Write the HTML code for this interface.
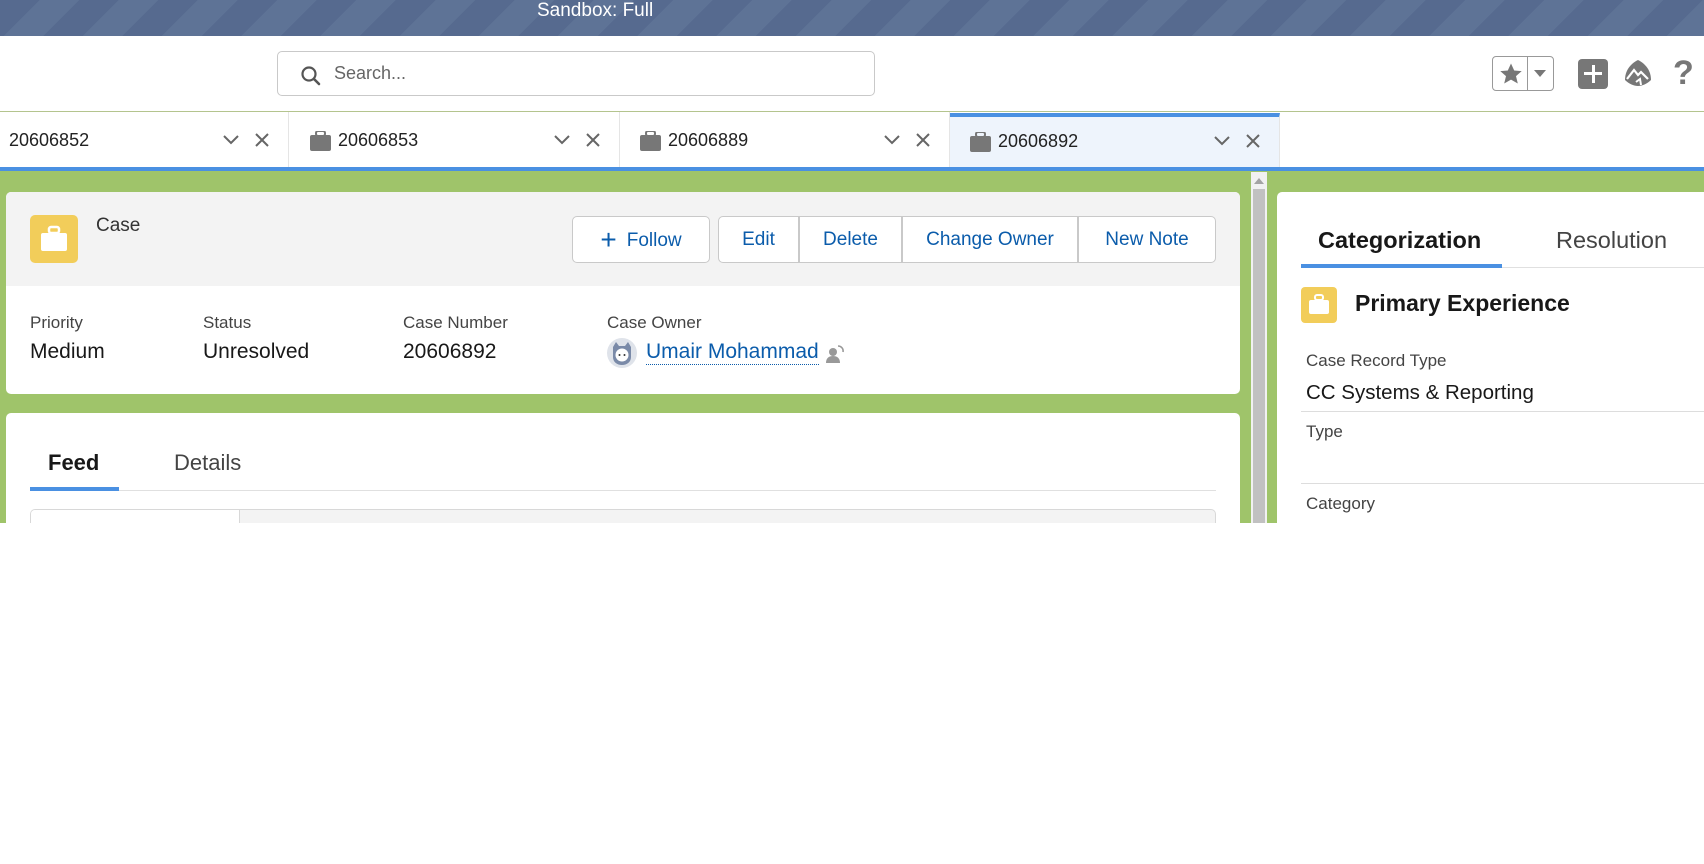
<!DOCTYPE html>
<html><head><meta charset="utf-8"><style>
*{box-sizing:border-box;margin:0;padding:0}
body{width:1704px;height:864px;overflow:hidden;background:#fff;font-family:"Liberation Sans",sans-serif;position:relative;color:#181818}
.abs{position:absolute}
.banner{left:0;top:0;width:1704px;height:36px;background:repeating-linear-gradient(135deg,#566a8f 0 28px,#5e7396 28px 56px)}
.search{left:277px;top:51px;width:598px;height:45px;border:1px solid #c9c9c9;border-radius:5px;background:#fff}
.tabbar{left:0;top:111px;width:1704px;height:60px;border-top:1px solid #b4c48e;background:#fff}
.tab{top:112px;height:56px;width:330px;border-right:1px solid #e5e5e5;font-size:18px;color:#222}
.tab .t{position:absolute;top:18px}
.bi{position:absolute;top:19px;width:21px;height:18px}
.green{left:0;top:171px;width:1704px;height:352px;background:#9fc46a}
.card{background:#fff;border-radius:5px}
.lbl{font-size:17px;color:#444}
.val{font-size:21px;color:#181818}
.btn{top:216px;height:47px;border:1px solid #c9c9c9;background:#fff;color:#0b5cab;font-size:19px;line-height:45px;text-align:center}
</style></head><body>
<div class="abs banner"></div>
<div class="abs" style="left:537px;top:0;color:#fff;font-size:19px;line-height:22px">Sandbox: Full</div>
<div class="abs" style="left:0;top:36px;width:1704px;height:75px;background:#fff"></div>
<div class="abs search">
<svg class="abs" style="left:22px;top:13px" width="22" height="22" viewBox="0 0 22 22"><circle cx="9" cy="9" r="6.5" fill="none" stroke="#555" stroke-width="2.2"/><path d="M14 14l5 5" stroke="#555" stroke-width="2.6" stroke-linecap="round"/></svg>
<span class="abs" style="left:56px;top:11px;font-size:18px;color:#666">Search...</span></div>
<div class="abs" style="left:1492px;top:56px;width:62px;height:35px;border:1px solid #999;border-radius:4px;background:#fff">
<svg class="abs" style="left:6px;top:5px" width="24" height="24" viewBox="0 0 24 24"><path d="M12 1.5l3.2 7 7.5.6-5.7 5 1.8 7.4L12 17.6 5.2 21.5 7 14.1 1.3 9.1l7.5-.6z" fill="#777"/></svg>
<div class="abs" style="left:34px;top:0;width:1px;height:33px;background:#999"></div>
<svg class="abs" style="left:40px;top:12px" width="14" height="10"><path d="M1 1h12L7 8z" fill="#777"/></svg></div>
<div class="abs" style="left:1578px;top:59px;width:30px;height:30px;background:#777;border-radius:4px">
<div class="abs" style="left:6px;top:13px;width:18px;height:3px;background:#fff"></div><div class="abs" style="left:13.5px;top:6px;width:3px;height:18px;background:#fff"></div></div>
<svg class="abs" style="left:1622px;top:58px" width="32" height="32" viewBox="0 0 32 32"><path d="M16 2C8 6 3 13 3 22c4 4 9 6 13 6s9-2 13-6c0-9-5-16-13-20z" fill="#777"/><path d="M5 21l7-9 4 5 3-3 7 7" fill="none" stroke="#fff" stroke-width="2.2"/><path d="M14 24l4-3 1 6" fill="none" stroke="#fff" stroke-width="2"/></svg>
<div class="abs" style="left:1673px;top:54px;font-size:34px;font-weight:bold;color:#777">?</div>

<div class="abs tabbar"></div>
<div class="abs tab" style="left:-41px"><span class="t" style="left:50px">20606852</span><div class="bi" style="left:34px;width:6px;background:#777;border-radius:2px"></div>
<svg class="abs" style="left:264px;top:23px" width="16" height="10"><path d="M1 1l7 7 7-7" fill="none" stroke="#666" stroke-width="2"/></svg><svg class="abs" style="left:296px;top:21px" width="14" height="14"><path d="M1 1l12 12M13 1L1 13" stroke="#666" stroke-width="2"/></svg></div>
<div class="abs tab" style="left:290px"><div class="bi" style="left:20px"><svg width="21" height="20"><rect x="6" y="0" width="9" height="5" rx="2" fill="none" stroke="#777" stroke-width="2"/><rect x="0" y="4" width="21" height="16" rx="2" fill="#777"/></svg></div><span class="t" style="left:48px">20606853</span>
<svg class="abs" style="left:264px;top:23px" width="16" height="10"><path d="M1 1l7 7 7-7" fill="none" stroke="#666" stroke-width="2"/></svg><svg class="abs" style="left:296px;top:21px" width="14" height="14"><path d="M1 1l12 12M13 1L1 13" stroke="#666" stroke-width="2"/></svg></div>
<div class="abs tab" style="left:620px"><div class="bi" style="left:20px"><svg width="21" height="20"><rect x="6" y="0" width="9" height="5" rx="2" fill="none" stroke="#777" stroke-width="2"/><rect x="0" y="4" width="21" height="16" rx="2" fill="#777"/></svg></div><span class="t" style="left:48px">20606889</span>
<svg class="abs" style="left:264px;top:23px" width="16" height="10"><path d="M1 1l7 7 7-7" fill="none" stroke="#666" stroke-width="2"/></svg><svg class="abs" style="left:296px;top:21px" width="14" height="14"><path d="M1 1l12 12M13 1L1 13" stroke="#666" stroke-width="2"/></svg></div>
<div class="abs tab" style="left:950px;width:330px;background:#eef4fc;border-top:4px solid #4a90e2;top:113px;height:55px"><div class="bi" style="left:20px;top:15px"><svg width="21" height="20"><rect x="6" y="0" width="9" height="5" rx="2" fill="none" stroke="#777" stroke-width="2"/><rect x="0" y="4" width="21" height="16" rx="2" fill="#777"/></svg></div><span class="t" style="left:48px;top:14px">20606892</span>
<svg class="abs" style="left:264px;top:19px" width="16" height="10"><path d="M1 1l7 7 7-7" fill="none" stroke="#666" stroke-width="2"/></svg><svg class="abs" style="left:296px;top:17px" width="14" height="14"><path d="M1 1l12 12M13 1L1 13" stroke="#666" stroke-width="2"/></svg></div>
<div class="abs" style="left:0;top:167px;width:1704px;height:4px;background:#4a90e2"></div>

<div class="abs green"></div>
<div class="abs card" style="left:6px;top:192px;width:1234px;height:202px;overflow:hidden">
<div class="abs" style="left:0;top:0;width:1234px;height:94px;background:#f3f3f3"></div>
<div class="abs" style="left:24px;top:23px;width:48px;height:48px;background:#f2cd5a;border-radius:5px"><svg class="abs" style="left:10px;top:10px" width="28" height="28"><rect x="9" y="2" width="10" height="6" rx="2" fill="none" stroke="#fff" stroke-width="2.5"/><rect x="1" y="8" width="26" height="18" rx="2" fill="#fff"/></svg></div>
<div class="abs" style="left:90px;top:23px;font-size:19px;color:#333">Case</div>
<div class="abs lbl" style="left:24px;top:121px">Priority</div><div class="abs val" style="left:24px;top:148px">Medium</div>
<div class="abs lbl" style="left:197px;top:121px">Status</div><div class="abs val" style="left:197px;top:148px">Unresolved</div>
<div class="abs lbl" style="left:397px;top:121px">Case Number</div><div class="abs val" style="left:397px;top:148px">20606892</div>
<div class="abs lbl" style="left:601px;top:121px">Case Owner</div>
<svg class="abs" style="left:601px;top:146px" width="30" height="30" viewBox="0 0 30 30"><circle cx="15" cy="15" r="15" fill="#dfe3ea"/><path d="M6 9l3-5 3 4h6l3-4 3 5v10c0 5-4 8-9 8s-9-3-9-8z" fill="#7a8aa8"/><circle cx="15" cy="17" r="6.5" fill="#fff"/><circle cx="12.5" cy="17" r="1" fill="#333"/><circle cx="17.5" cy="17" r="1" fill="#333"/></svg>
<div class="abs" style="left:640px;top:147px;font-size:21px;color:#0b5cab;border-bottom:1px dotted #0b5cab;line-height:25px">Umair Mohammad</div>
<svg class="abs" style="left:820px;top:152px" width="20" height="20" viewBox="0 0 20 20"><circle cx="7" cy="8" r="4" fill="#999"/><path d="M0 19c0-5 3-7 7-7s7 2 7 7z" fill="#999"/><path d="M12 2a5 5 0 0 1 5 6" fill="none" stroke="#999" stroke-width="1.6"/></svg>
</div>
<div class="abs btn" style="left:572px;width:138px;border-radius:5px"><span style="font-size:28px;vertical-align:-3px;margin-right:10px">+</span>Follow</div>
<div class="abs btn" style="left:718px;width:81px;border-radius:5px 0 0 5px">Edit</div>
<div class="abs btn" style="left:799px;width:103px;border-left:1px solid #c9c9c9">Delete</div>
<div class="abs btn" style="left:902px;width:176px;border-left:1px solid #c9c9c9">Change Owner</div>
<div class="abs btn" style="left:1078px;width:138px;border-radius:0 5px 5px 0">New Note</div>

<div class="abs" style="left:6px;top:413px;width:1234px;height:110px;background:#fff;border-radius:5px 5px 0 0"></div>
<div class="abs" style="left:48px;top:450px;font-size:22px;font-weight:bold">Feed</div>
<div class="abs" style="left:174px;top:450px;font-size:22px;color:#444">Details</div>
<div class="abs" style="left:30px;top:490px;width:1186px;height:1px;background:#e0e0e0"></div>
<div class="abs" style="left:30px;top:487px;width:89px;height:4px;background:#4a90e2"></div>
<div class="abs" style="left:30px;top:509px;width:1186px;height:14px;background:#f3f3f3;border:1px solid #d8d8d8;border-bottom:none;border-radius:5px 5px 0 0"></div>
<div class="abs" style="left:31px;top:510px;width:209px;height:13px;background:#fff;border-right:1px solid #d8d8d8;border-radius:4px 0 0 0"></div>

<div class="abs" style="left:1251px;top:172px;width:16px;height:351px;background:#f1f1f1"></div>
<div class="abs" style="left:1253px;top:189px;width:12px;height:334px;background:#c1c1c1"></div>
<svg class="abs" style="left:1254px;top:178px" width="10" height="6"><path d="M0 6L5 0l5 6z" fill="#a3a3a3"/></svg>

<div class="abs" style="left:1277px;top:192px;width:427px;height:331px;background:#fff;border-radius:5px 0 0 0"></div>
<div class="abs" style="left:1318px;top:227px;font-size:23.5px;font-weight:bold">Categorization</div>
<div class="abs" style="left:1556px;top:227px;font-size:23.5px;color:#444">Resolution</div>
<div class="abs" style="left:1301px;top:267px;width:403px;height:1px;background:#e0e0e0"></div>
<div class="abs" style="left:1301px;top:264px;width:201px;height:4px;background:#4a90e2"></div>
<div class="abs" style="left:1301px;top:287px;width:36px;height:36px;background:#f2cd5a;border-radius:4px"><svg class="abs" style="left:7px;top:7px" width="22" height="22"><rect x="7" y="1" width="8" height="5" rx="2" fill="none" stroke="#fff" stroke-width="2"/><rect x="1" y="6" width="20" height="14" rx="2" fill="#fff"/></svg></div>
<div class="abs" style="left:1355px;top:290px;font-size:23px;font-weight:bold">Primary Experience</div>
<div class="abs lbl" style="left:1306px;top:351px">Case Record Type</div>
<div class="abs val" style="left:1306px;top:381px;font-size:20.5px">CC Systems &amp; Reporting</div>
<div class="abs" style="left:1301px;top:411px;width:403px;height:1px;background:#ddd"></div>
<div class="abs lbl" style="left:1306px;top:422px">Type</div>
<div class="abs" style="left:1301px;top:483px;width:403px;height:1px;background:#ddd"></div>
<div class="abs lbl" style="left:1306px;top:494px">Category</div>
</body></html>
